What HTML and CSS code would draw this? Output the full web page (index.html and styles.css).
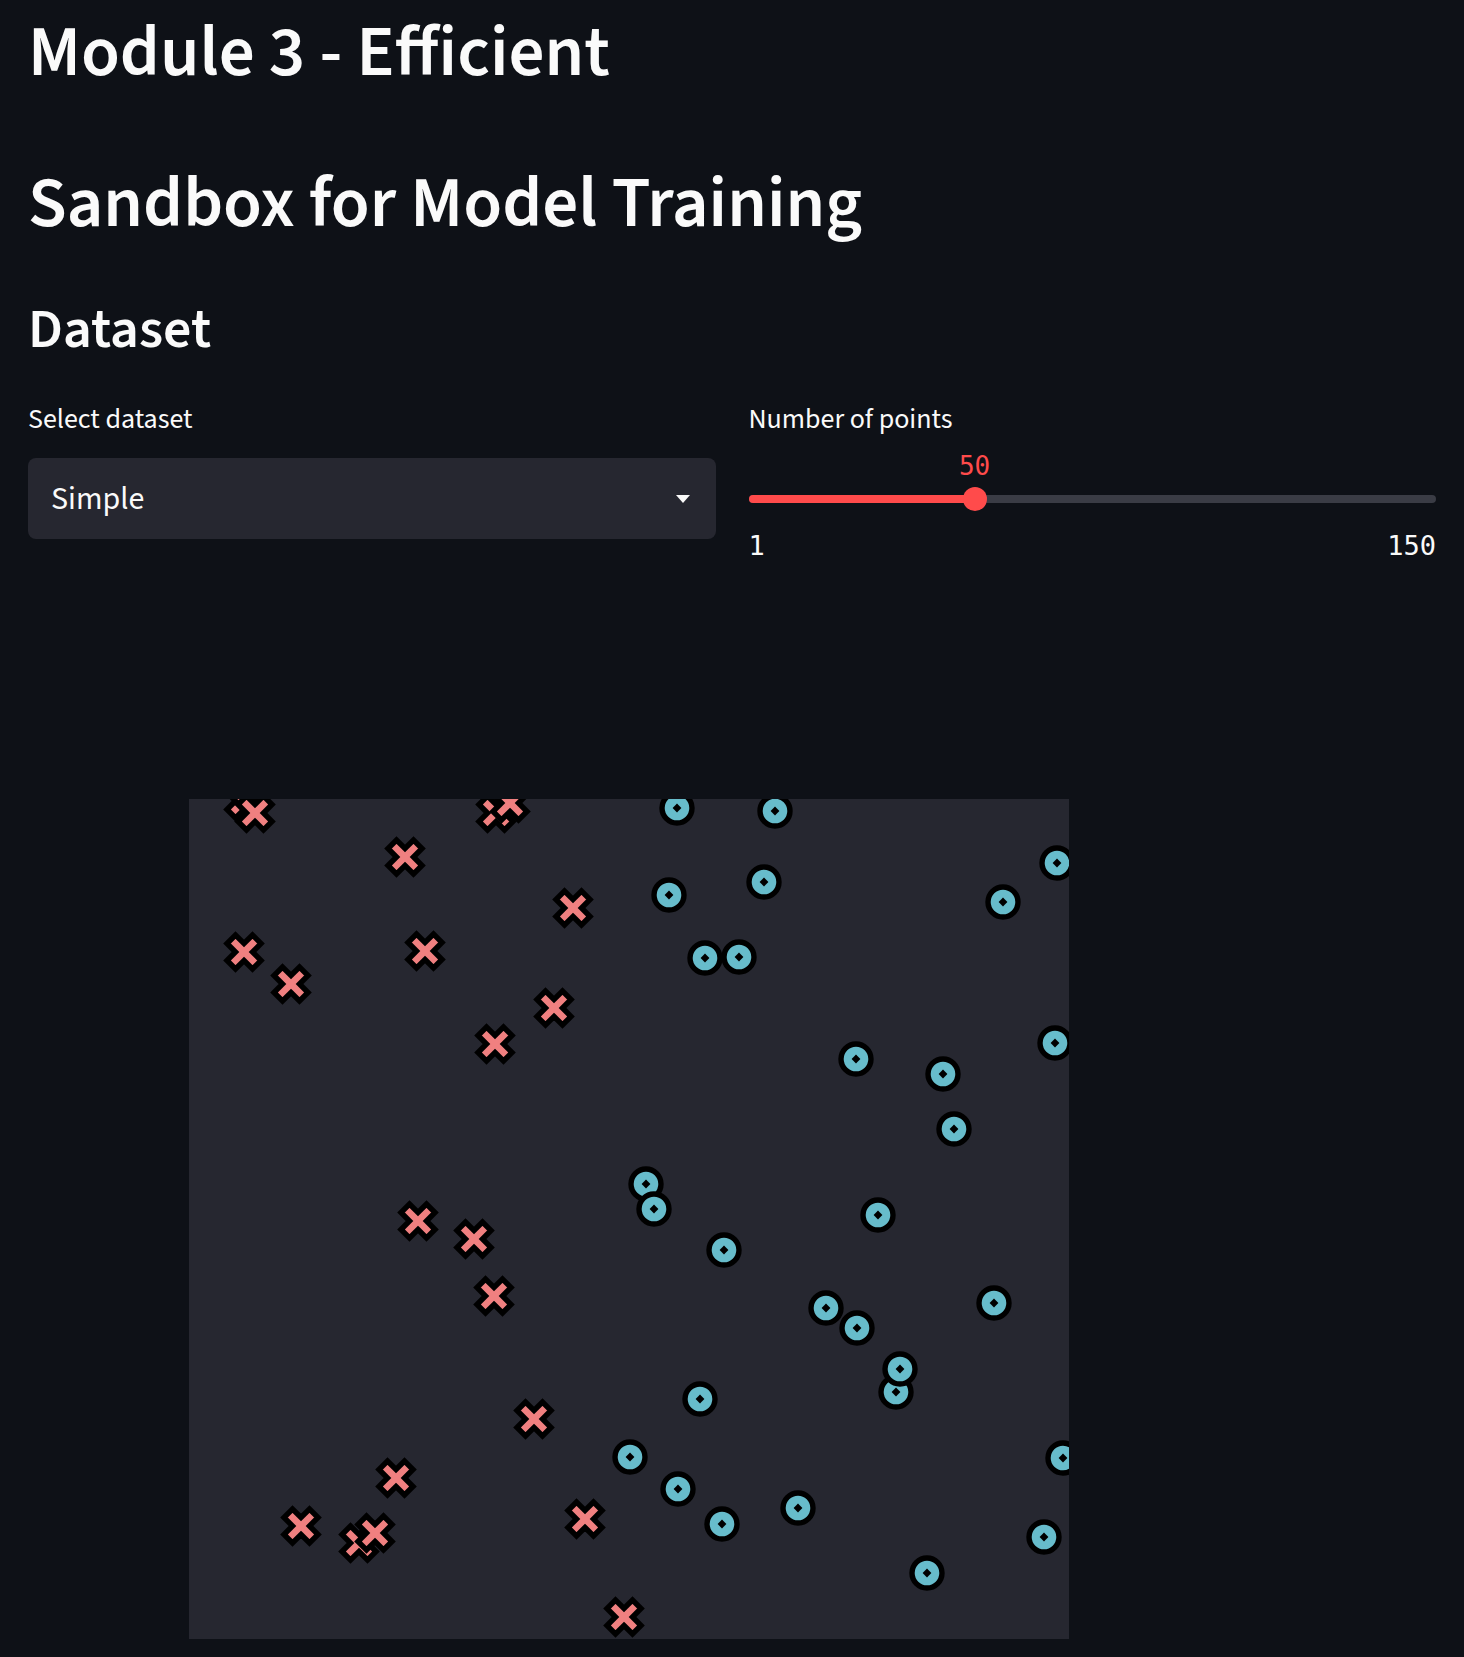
FILE: index.html
```html
<!DOCTYPE html>
<html lang="en">
<head>
<meta charset="utf-8">
<title>Module 3 - Efficient</title>
<link rel="stylesheet" href="styles.css">
</head>
<body>
<main class="main">
  <h1 class="title">Module 3 - Efficient</h1>
  <h1 class="title title-second">Sandbox for Model Training</h1>
  <h2 class="section">Dataset</h2>

  <div class="columns">
    <div class="col">
      <label class="widget-label">Select dataset</label>
      <div class="select">
        <span class="select-value">Simple</span>
        <svg class="select-arrow" width="14" height="8" viewBox="0 0 14 8"><path d="M0 0 L14 0 L7 8 Z" fill="#fafafa"/></svg>
      </div>
    </div>
    <div class="col">
      <label class="widget-label">Number of points</label>
      <div class="slider">
        <div class="slider-value-row">
          <span class="slider-value" style="left: 32.89%">50</span>
        </div>
        <div class="slider-track-wrap">
          <div class="slider-track">
            <div class="slider-fill" style="width: 32.89%"></div>
          </div>
          <div class="slider-thumb" style="left: 32.89%"></div>
        </div>
        <div class="slider-minmax">
          <span>1</span>
          <span>150</span>
        </div>
      </div>
    </div>
  </div>

  <div class="chart">
    <svg class="plot" width="880" height="840" viewBox="0 0 880 840">
      <defs>
        <clipPath id="clip"><rect x="0" y="0" width="880" height="840"/></clipPath>
        <path id="mx" d="M0,8.5 l8.5,8.5 l8.5,-8.5 l-8.5,-8.5 l8.5,-8.5 l-8.5,-8.5 l-8.5,8.5 l-8.5,-8.5 l-8.5,8.5 l8.5,8.5 l-8.5,8.5 l8.5,8.5 Z" fill="#f08080" stroke="#000" stroke-width="5.4" stroke-linejoin="miter"/>
        <g id="mo">
          <circle cx="0" cy="0" r="15" fill="#67bccb" stroke="#000" stroke-width="5.4"/>
          <path d="M0,-4.4 L4.4,0 L0,4.4 L-4.4,0 Z" fill="#000"/>
        </g>
      </defs>
      <rect x="0" y="0" width="880" height="840" fill="#262730"/>
      <g clip-path="url(#clip)">
        <use href="#mx" x="55" y="2"/>
        <use href="#mx" x="66" y="14"/>
        <use href="#mx" x="307" y="14"/>
        <use href="#mx" x="321" y="4"/>
        <use href="#mx" x="216" y="58"/>
        <use href="#mx" x="384" y="109"/>
        <use href="#mx" x="55" y="153"/>
        <use href="#mx" x="236" y="152"/>
        <use href="#mx" x="102" y="185"/>
        <use href="#mx" x="365" y="209"/>
        <use href="#mx" x="306" y="245"/>
        <use href="#mx" x="229" y="422"/>
        <use href="#mx" x="285" y="440"/>
        <use href="#mx" x="305" y="497"/>
        <use href="#mx" x="345" y="620"/>
        <use href="#mx" x="207" y="679"/>
        <use href="#mx" x="112" y="727"/>
        <use href="#mx" x="170" y="744"/>
        <use href="#mx" x="186" y="734"/>
        <use href="#mx" x="396" y="720"/>
        <use href="#mx" x="435" y="818"/>

        <use href="#mo" x="488" y="9"/>
        <use href="#mo" x="586" y="12"/>
        <use href="#mo" x="480" y="96"/>
        <use href="#mo" x="575" y="83"/>
        <use href="#mo" x="516" y="159"/>
        <use href="#mo" x="550" y="158"/>
        <use href="#mo" x="814" y="103"/>
        <use href="#mo" x="868" y="64"/>
        <use href="#mo" x="667" y="260"/>
        <use href="#mo" x="754" y="275"/>
        <use href="#mo" x="866" y="244"/>
        <use href="#mo" x="765" y="330"/>
        <use href="#mo" x="457" y="385"/>
        <use href="#mo" x="465" y="410"/>
        <use href="#mo" x="689" y="416"/>
        <use href="#mo" x="535" y="451"/>
        <use href="#mo" x="637" y="509"/>
        <use href="#mo" x="668" y="529"/>
        <use href="#mo" x="805" y="504"/>
        <use href="#mo" x="707" y="593"/>
        <use href="#mo" x="711" y="570"/>
        <use href="#mo" x="511" y="600"/>
        <use href="#mo" x="874" y="659"/>
        <use href="#mo" x="441" y="658"/>
        <use href="#mo" x="489" y="690"/>
        <use href="#mo" x="533" y="725"/>
        <use href="#mo" x="609" y="709"/>
        <use href="#mo" x="855" y="738"/>
        <use href="#mo" x="738" y="774"/>
      </g>
    </svg>
  </div>
</main>
</body>
</html>
```

FILE: styles.css
```css
* {
  box-sizing: border-box;
}

html, body {
  margin: 0;
  padding: 0;
  background: #0e1117;
}

body {
  color: #fafafa;
  font-family: "Source Sans Pro", "Source Sans 3", Roboto, "Noto Sans", sans-serif;
}

.main {
  padding: 13px 28px 16px 28px;
}

.title {
  margin: 0;
  font-size: 71px;
  line-height: 80px;
  font-weight: 600;
}

.title-second {
  margin-top: 71px;
}

.section {
  margin: 54px 0 0 0;
  font-size: 56px;
  line-height: 64px;
  font-weight: 600;
}

.columns {
  margin-top: 39px;
  display: grid;
  grid-template-columns: 1fr 1fr;
  column-gap: 33px;
}

.col {
  display: flex;
  flex-direction: column;
}

.widget-label {
  display: block;
  font-size: 28px;
  line-height: 36px;
  font-weight: 400;
}

.select {
  margin-top: 21px;
  height: 81px;
  background: #262730;
  border-radius: 8px;
  display: flex;
  align-items: center;
  justify-content: space-between;
  padding: 0 26px 0 23px;
}

.select-value {
  font-size: 32px;
}

.select-arrow {
  display: block;
}

.slider {
  display: flex;
  flex-direction: column;
}

.slider-value-row {
  margin-top: 15px;
  height: 30px;
  position: relative;
  font-family: "DejaVu Sans Mono", "Liberation Mono", monospace;
  font-size: 26px;
  line-height: 28px;
  color: #ff4b4b;
}

.slider-value {
  position: absolute;
  top: 0;
  transform: translateX(-50%);
}

.slider-track-wrap {
  position: relative;
  height: 34px;
  display: flex;
  align-items: center;
}

.slider-track {
  width: 100%;
  height: 8px;
  border-radius: 4px;
  background: #3a3c45;
  overflow: hidden;
}

.slider-fill {
  height: 100%;
  background: #ff4b4b;
}

.slider-thumb {
  position: absolute;
  top: 5px;
  width: 24px;
  height: 24px;
  margin-left: -12px;
  border-radius: 50%;
  background: #ff4b4b;
}

.slider-minmax {
  margin-top: 16px;
  display: flex;
  justify-content: space-between;
  font-family: "DejaVu Sans Mono", "Liberation Mono", monospace;
  font-size: 27px;
  line-height: 28px;
  color: #fafafa;
}

.chart {
  margin-top: 32px;
  padding: 207px 0 0 161px;
}

.plot {
  display: block;
}
```
